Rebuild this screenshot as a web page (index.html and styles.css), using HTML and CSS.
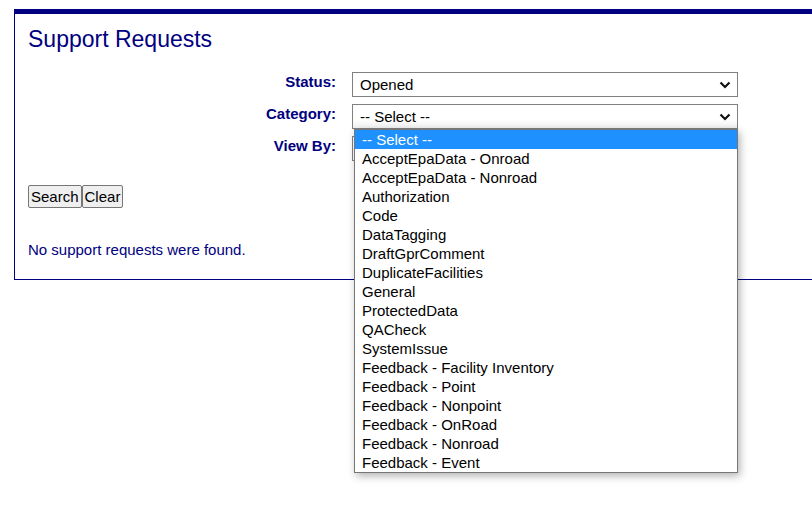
FILE: index.html
```html
<!DOCTYPE html>
<html lang="en">
<head>
  <meta charset="UTF-8" />
  <title>Support Requests</title>
  <link rel="stylesheet" href="styles.css">
</head>
<body>

  <div class="panel">
    <h1>Support Requests</h1>

    <!-- Filters -->
    <div class="filter-form">
      <label for="statusSel">Status:</label>
      <div class="select-wrap">
        <select id="statusSel">
          <option>Opened</option>
          <option>Closed</option>
        </select>
        <svg class="chevron" width="12" height="8" viewBox="0 0 12 8"><path d="M1.5 1.5 L6 6 L10.5 1.5" fill="none" stroke="#111" stroke-width="2.2"/></svg>
      </div>

      <label for="categorySel">Category:</label>
      <div class="select-wrap">
        <select id="categorySel" class="open">
          <option>-- Select --</option>
        </select>
        <svg class="chevron" width="12" height="8" viewBox="0 0 12 8"><path d="M1.5 1.5 L6 6 L10.5 1.5" fill="none" stroke="#111" stroke-width="2.2"/></svg>
        <!-- open list of the category select -->
        <ul class="option-list">
          <li class="active">-- Select --</li>
          <li>AcceptEpaData - Onroad</li>
          <li>AcceptEpaData - Nonroad</li>
          <li>Authorization</li>
          <li>Code</li>
          <li>DataTagging</li>
          <li>DraftGprComment</li>
          <li>DuplicateFacilities</li>
          <li>General</li>
          <li>ProtectedData</li>
          <li>QACheck</li>
          <li>SystemIssue</li>
          <li>Feedback - Facility Inventory</li>
          <li>Feedback - Point</li>
          <li>Feedback - Nonpoint</li>
          <li>Feedback - OnRoad</li>
          <li>Feedback - Nonroad</li>
          <li>Feedback - Event</li>
        </ul>
      </div>

      <label for="viewSel">View By:</label>
      <div class="select-wrap">
        <select id="viewSel">
          <option>All</option>
        </select>
      </div>
    </div>

    <div class="buttons">
      <button type="button">Search</button><button type="button">Clear</button>
    </div>

    <p class="message">No support requests were found.</p>
  </div>

</body>
</html>
```

FILE: styles.css
```css
html {
  height: 100%;
}

body {
  font-family: "Liberation Sans", Arial, sans-serif;
  font-size: 15px;
  background: white;
  margin: 0;
  min-height: 100%;
  padding-top: 9px;
  box-sizing: border-box;
}

.panel {
  margin: 0 0 0 14px;
  border-top: 5px solid #000080;
  border-left: 1px solid #000080;
  border-bottom: 1px solid #000080;
  padding: 0 0 21px 13px;
}

h1 {
  font-size: 23px;
  font-weight: normal;
  line-height: 26px;
  color: #000080;
  margin: 12px 0 20px;
}

/* Filters */
.filter-form {
  display: grid;
  grid-template-columns: 308px 386px;
  grid-auto-rows: 25px;
  column-gap: 16px;
  row-gap: 7px;
  align-items: start;
}

.filter-form label {
  text-align: right;
  font-weight: bold;
  color: #000080;
  line-height: 19px;
}

.select-wrap {
  position: relative;
  height: 25px;
}

.filter-form select {
  appearance: none;
  -webkit-appearance: none;
  display: block;
  width: 386px;
  height: 25px;
  font-family: "Liberation Sans", Arial, sans-serif;
  font-size: 15px;
  color: black;
  background: white;
  border: 1px solid #808080;
  border-radius: 0;
  padding: 0 7px;
}

.filter-form select.open {
  background: linear-gradient(white 60%, #f1f1f1);
}

.chevron {
  position: absolute;
  right: 7px;
  top: 9px;
  pointer-events: none;
}

.option-list {
  position: absolute;
  top: 25px;
  left: 2px;
  width: 382px;
  margin: 0;
  padding: 0;
  list-style: none;
  background: white;
  border: 1px solid #767676;
  box-shadow: 2px 3px 8px rgba(0, 0, 0, 0.3);
  z-index: 10;
}

.option-list li {
  height: 19px;
  line-height: 19px;
  padding-left: 7px;
  color: black;
}

.option-list li.active {
  background: #1e90ff;
  color: white;
}

.buttons {
  margin-top: 24px;
  display: flex;
}

.buttons button {
  font-family: "Liberation Sans", Arial, sans-serif;
  font-size: 15px;
  height: 23px;
  padding: 0 2px;
  background: #efefef;
  border: 1px solid #767676;
  border-radius: 2px;
  color: black;
}

.message {
  color: #000080;
  margin: 33px 0 0;
  line-height: 17px;
}
```
